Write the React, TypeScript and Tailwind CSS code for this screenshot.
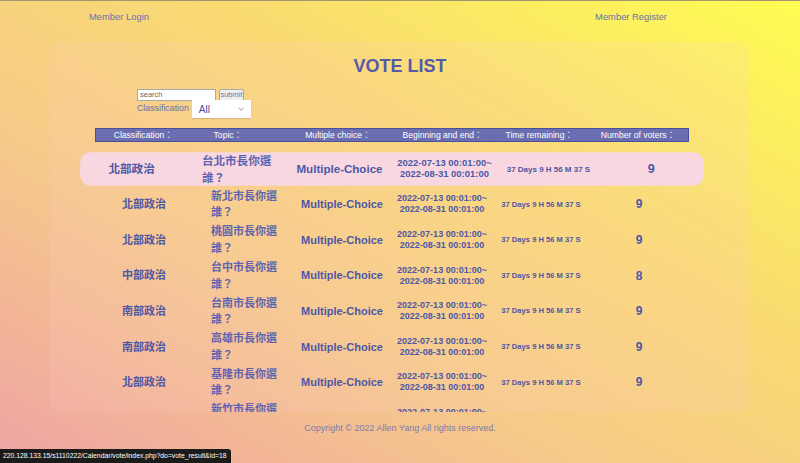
import React from 'react';

type Vote = {
    category: string;
    topic: string;
    voters: number;
};

const votes: Vote[] = [
    { category: '北部政治', topic: '台北市長你選誰？', voters: 9 },
    { category: '北部政治', topic: '新北市長你選誰？', voters: 9 },
    { category: '北部政治', topic: '桃園市長你選誰？', voters: 9 },
    { category: '中部政治', topic: '台中市長你選誰？', voters: 8 },
    { category: '南部政治', topic: '台南市長你選誰？', voters: 9 },
    { category: '南部政治', topic: '高雄市長你選誰？', voters: 9 },
    { category: '北部政治', topic: '基隆市長你選誰？', voters: 9 },
    { category: '北部政治', topic: '新竹市長你選誰？', voters: 9 },
];

const headers = [
    { label: 'Classification：', cls: 'w-[95px]' },
    { label: 'Topic：', cls: 'w-[75px]' },
    { label: 'Multiple choice：', cls: 'w-[146px]' },
    { label: 'Beginning and end：', cls: 'w-[64px]' },
    { label: 'Time remaining：', cls: 'w-[130px]' },
    { label: 'Number of voters：', cls: 'w-[84px] pr-[16px]' },
];

function VoteRow({ vote, active }: { vote: Vote; active?: boolean }) {
    return (
        <div className="h-[35.6px] py-[1.6px]">
            <div
                className={`flex h-full items-center text-[#4d57a6] font-bold ${
                    active ? 'scale-[1.05] rounded-[10px] bg-[#f8d7e0]' : ''
                }`}
            >
                <div className="w-[98px] flex justify-center text-[11px] whitespace-nowrap">{vote.category}</div>
                <div className="w-[88px] pl-[18px]">
                    <p className="w-[70px] text-[11px] leading-[16.5px] text-[#5f63b0]">{vote.topic}</p>
                </div>
                <div className="w-[122px] flex justify-center text-[11px] whitespace-nowrap">Multiple-Choice</div>
                <div className="w-[78px] flex justify-center">
                    <p className="text-[9px] leading-[11px] text-center whitespace-nowrap">
                        2022-07-13 00:01:00~
                        <br />
                        2022-08-31 00:01:00
                    </p>
                </div>
                <div className="w-[120px] flex justify-center text-[7.6px] whitespace-nowrap">
                    37 Days 9 H 56 M 37 S
                </div>
                <div className="w-[76px] flex justify-center text-[12px]">{vote.voters}</div>
            </div>
        </div>
    );
}

export default function App() {
    return (
        <div className="relative h-[463px] w-full overflow-hidden border-t border-[#a39570] bg-[linear-gradient(to_top_right,#eea3a3_0%,#f6c98a_35%,#f9dc70_65%,#fffd52_100%)] font-['Liberation_Sans','Noto_Sans_CJK_TC',sans-serif]">
            <header className="flex justify-between pl-[89px] pr-[133px] pt-[9px] h-[41px] text-[9.4px] text-[#6d6fb0]">
                <span>Member Login</span>
                <span>Member Register</span>
            </header>

            <main className="mx-[50px] h-[370px] overflow-hidden rounded-[10px] bg-[rgba(255,205,205,0.16)]">
                <h1 className="pt-[14px] h-[46px] text-center text-[18px] leading-[20px] font-bold text-[#5659a7]">
                    VOTE LIST
                </h1>

                <div className="pl-[87px]">
                    <div className="flex items-center gap-[3px] h-[13px]">
                        <div className="w-[79px] h-[12px] bg-white border border-[#a9a9a9] px-[2px] text-[7.5px] leading-[10px] text-[#666]">
                            search
                        </div>
                        <div className="w-[25px] h-[12px] bg-[#efefef] border border-[#a9a9a9] rounded-[2px] text-[7.5px] leading-[10px] text-center text-[#7373a8]">
                            submit
                        </div>
                    </div>
                    <div className="flex items-center gap-[3px] h-[18px] mt-[-1px]">
                        <span className="text-[8.8px] text-[#6a6cb0]">Classification</span>
                        <div className="flex items-center justify-between w-[59px] h-[18px] bg-white px-[7px] shadow-[0_1px_1px_rgba(0,0,0,0.12)]">
                            <span className="text-[10px] text-[#4a4aa0]">All</span>
                            <svg width="6" height="4" viewBox="0 0 6 4" fill="none" stroke="#888" strokeWidth="0.9">
                                <path d="M0.5 0.7 L3 3.2 L5.5 0.7" />
                            </svg>
                        </div>
                    </div>
                </div>

                <div className="ml-[45px] mt-[10px] w-[594px]">
                    <div className="flex h-[14px] items-center bg-[#6a6eb0] border border-[#4c509c] text-[8.6px] text-white">
                        {headers.map((h) => (
                            <div key={h.label} className={`${h.cls} flex justify-center whitespace-nowrap`}>
                                {h.label}
                            </div>
                        ))}
                    </div>
                    <div className="mt-[9px]">
                        {votes.map((v, i) => (
                            <VoteRow key={i} vote={v} active={i === 0} />
                        ))}
                    </div>
                </div>
            </main>

            <footer className="pt-[10px] text-center text-[9px] text-[#7d7bb0]">
                Copyright © 2022 Allen Yang All rights reserved.
            </footer>

            <div className="absolute bottom-0 left-0 h-[14px] rounded-tr-[3px] bg-[#1b1b1b] pl-[3px] pr-[5px] text-[6.8px] leading-[14px] text-white whitespace-nowrap">
                220.128.133.15/s1110222/Calendar/vote/index.php?do=vote_result&amp;id=18
            </div>
        </div>
    );
}
